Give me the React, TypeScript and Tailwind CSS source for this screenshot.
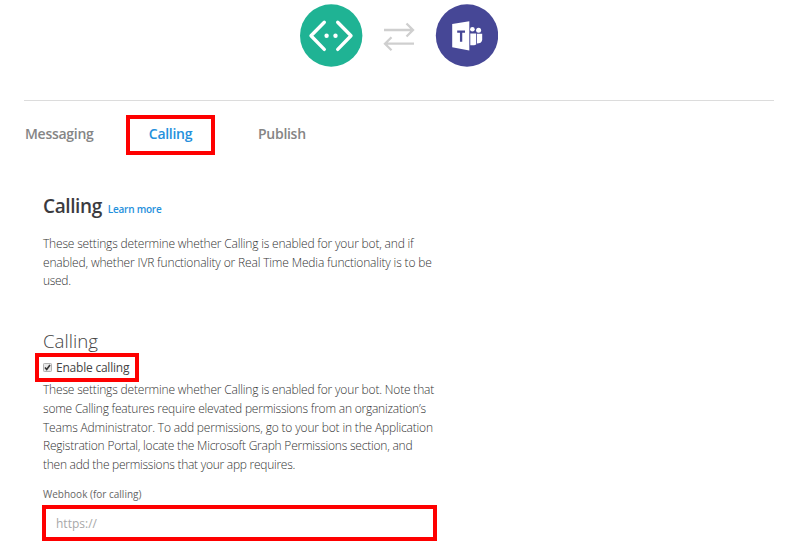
function BotLogo() {
  return (
    <svg className="size-[63px]" viewBox="0 0 63 63">
      <circle cx="31.2" cy="31.5" r="31.2" fill="#1fb394" />
      <path d="M24.3 18.3 11 31.8 24.3 45.4M37.7 18.3 51 31.8 37.7 45.4" fill="none" stroke="#fff" strokeWidth="3.4" strokeLinecap="round" strokeLinejoin="round" />
      <circle cx="26.6" cy="31.8" r="2.2" fill="#fff" />
      <circle cx="35.5" cy="31.8" r="2.2" fill="#fff" />
    </svg>
  );
}

function Arrows() {
  return (
    <svg className="mx-[20px] h-[30px] w-8" viewBox="0 0 32 30" fill="none" stroke="#cfcfcf" strokeWidth="2.3">
      <path d="M1 8H30M23.5 1.5 30 8 23.5 14.5" />
      <path d="M31 21.7H2M8.5 15.2 2 21.7 8.5 28.2" />
    </svg>
  );
}

function TeamsLogo() {
  return (
    <svg className="size-[63px]" viewBox="0 0 63 63">
      <circle cx="32" cy="31.5" r="31.2" fill="#464796" />
      <g fill="#fff">
        <circle cx="37.4" cy="25.3" r="2.3" />
        <circle cx="43.6" cy="26.3" r="2.5" />
        <path d="M35.3 29.6H41.2V40.4Q39.5 41.5 35.3 41.3Z" />
        <path d="M42 29.8H47.2V36Q46.5 39.5 42 39.6Z" />
        <path d="M17.2 20 34.3 17.2V46.4L17.2 43.3Z" />
      </g>
      <path d="M22.2 27.6H30M26.1 27.6V37.7" stroke="#464796" strokeWidth="2.3" />
    </svg>
  );
}

type Row = { text: string; spacing: string };

const intro: Row[] = [
  { text: "These settings determine whether Calling is enabled for your bot, and if", spacing: "tracking-[-0.18px]" },
  { text: "enabled, whether IVR functionality or Real Time Media functionality is to be", spacing: "tracking-[-0.155px]" },
  { text: "used.", spacing: "tracking-[-0.3px]" },
];

const details: Row[] = [
  { text: "These settings determine whether Calling is enabled for your bot. Note that", spacing: "tracking-[-0.18px]" },
  { text: "some Calling features require elevated permissions from an organization’s", spacing: "tracking-[-0.212px]" },
  { text: "Teams Administrator. To add permissions, go to your bot in the Application", spacing: "tracking-[-0.169px]" },
  { text: "Registration Portal, locate the Microsoft Graph Permissions section, and", spacing: "tracking-[-0.222px]" },
  { text: "then add the permissions that your app requires.", spacing: "tracking-[-0.26px]" },
];

function Paragraph({ rows }: { rows: Row[] }) {
  return (
    <p className="text-[12px] leading-[18.7px] font-light whitespace-nowrap text-[#333]">
      {rows.map((row) => (
        <span key={row.text} className={`block ${row.spacing}`}>{row.text}</span>
      ))}
    </p>
  );
}

export default function App() {
  return (
    <main className="h-[546px] w-[792px] overflow-hidden bg-white font-['Open_Sans','Noto_Sans',sans-serif] text-[#444]">
      <header className="ml-6 flex h-[101px] w-[750px] items-start border-b border-[#dcdcdc] pt-1 pl-[276px]">
        <BotLogo />
        <div className="pt-[18px]"><Arrows /></div>
        <TeamsLogo />
      </header>
      <nav className="flex h-[54px] items-start pt-[14px] pl-[25px] text-[14px] leading-[37px] font-semibold tracking-[-0.28px] text-[#858585]">
        <a className="w-[101px]">Messaging</a>
        <a className="h-10 w-[89px] border-4 border-[#fe0000] text-center leading-[29px] text-[#2490dc]">Calling</a>
        <a className="ml-[43px]">Publish</a>
      </nav>
      <section className="ml-[43px] pt-[37px]">
        <h1 className="flex h-7 items-baseline text-[19px] leading-7 font-semibold tracking-[-0.4px] text-[#3b3b3f]">
          Calling <a className="ml-[6px] text-[10px] tracking-[-0.23px] text-[#2490dc]">Learn more</a>
        </h1>
        <div className="pt-[15px]"><Paragraph rows={intro} /></div>
        <h2 className="mt-[37px] h-[25px] text-[18.7px] leading-[26px] font-light">Calling</h2>
        <label className="-ml-[8px] flex h-[29px] w-[104px] items-center border-4 border-[#fe0000] pl-[4px] text-[12px] tracking-[-0.22px] whitespace-nowrap">
          <svg className="mr-[4px] size-[9px] shrink-0" viewBox="0 0 9 9">
            <rect x=".5" y=".5" width="8" height="8" rx=".8" fill="#e8e8e8" stroke="#b0b0b0" />
            <path d="M2 4.5 3.7 6.5 7 2" fill="none" stroke="#333" strokeWidth="1.6" />
          </svg>
          Enable calling
        </label>
        <div className="-mt-px"><Paragraph rows={details} /></div>
        <p className="mt-[9px] h-[21px] text-[10px] leading-5 text-[#666]">Webhook (for calling)</p>
        <div className="-ml-px flex h-9 w-[395px] items-center border-4 border-[#fe0000] pt-[2px] pl-[10px] text-[12px] text-[#a8a8a8]">https://</div>
      </section>
    </main>
  );
}
